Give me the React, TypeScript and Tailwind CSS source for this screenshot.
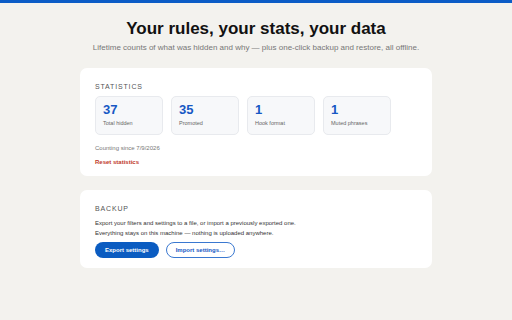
export default function App() {
  const stats = [
    { n: "37", l: "Total hidden" },
    { n: "35", l: "Promoted" },
    { n: "1", l: "Hook format" },
    { n: "1", l: "Muted phrases" },
  ];
  return (
    <div
      className="w-[512px] h-[320px] bg-[#f3f2ee] flex flex-col items-center"
      style={{ fontFamily: '"Liberation Sans", Arial, sans-serif' }}
    >
      <div className="w-full h-[3px] bg-[#0b5cc6]" />
      <h1 className="mt-[16px] text-[17px] leading-[20px] font-bold text-[#111]">Your rules, your stats, your data</h1>
      <p className="mt-[4px] text-[8px] leading-[10px] text-[#777]">
        Lifetime counts of what was hidden and why — plus one-click backup and restore, all offline.
      </p>
      <div className="mt-[15px] w-[352px] bg-white rounded-[7px] px-[15px] pt-[15px] pb-[10px]">
        <div className="text-[7px] leading-[8px] tracking-[0.12em] text-[#555] font-medium">STATISTICS</div>
        <div className="mt-[5px] flex gap-[8px]">
          {stats.map((s) => (
            <div key={s.l} className="w-[68px] h-[39px] rounded-[5px] bg-[#f7f8fa] border border-[#e8eaee] px-[7px] pt-[6px]">
              <div className="text-[13px] leading-[14px] font-bold text-[#1758c4]">{s.n}</div>
              <div className="mt-[3px] text-[5.5px] leading-[7px] text-[#666]">{s.l}</div>
            </div>
          ))}
        </div>
        <div className="mt-[9px] text-[6px] leading-[8px] text-[#777]">Counting since 7/9/2026</div>
        <div className="mt-[6px] text-[6px] leading-[8px] font-bold text-[#c0392b]">Reset statistics</div>
      </div>
      <div className="mt-[14px] w-[352px] bg-white rounded-[7px] px-[15px] pt-[15px] pb-[10px]">
        <div className="text-[7px] leading-[8px] tracking-[0.12em] text-[#555] font-medium">BACKUP</div>
        <div className="mt-[5px] text-[6px] leading-[10px] text-[#333]">
          Export your filters and settings to a file, or import a previously exported one.
          <br />
          Everything stays on this machine — nothing is uploaded anywhere.
        </div>
        <div className="mt-[4px] flex gap-[7px]">
          <button className="h-[16px] px-[10px] rounded-full bg-[#0b5cc1] text-white text-[6px] font-bold">Export settings</button>
          <button className="h-[16px] px-[9px] rounded-full bg-white border border-[#3a78d0] text-[#1758c4] text-[6px] font-bold">Import settings…</button>
        </div>
      </div>
    </div>
  );
}
